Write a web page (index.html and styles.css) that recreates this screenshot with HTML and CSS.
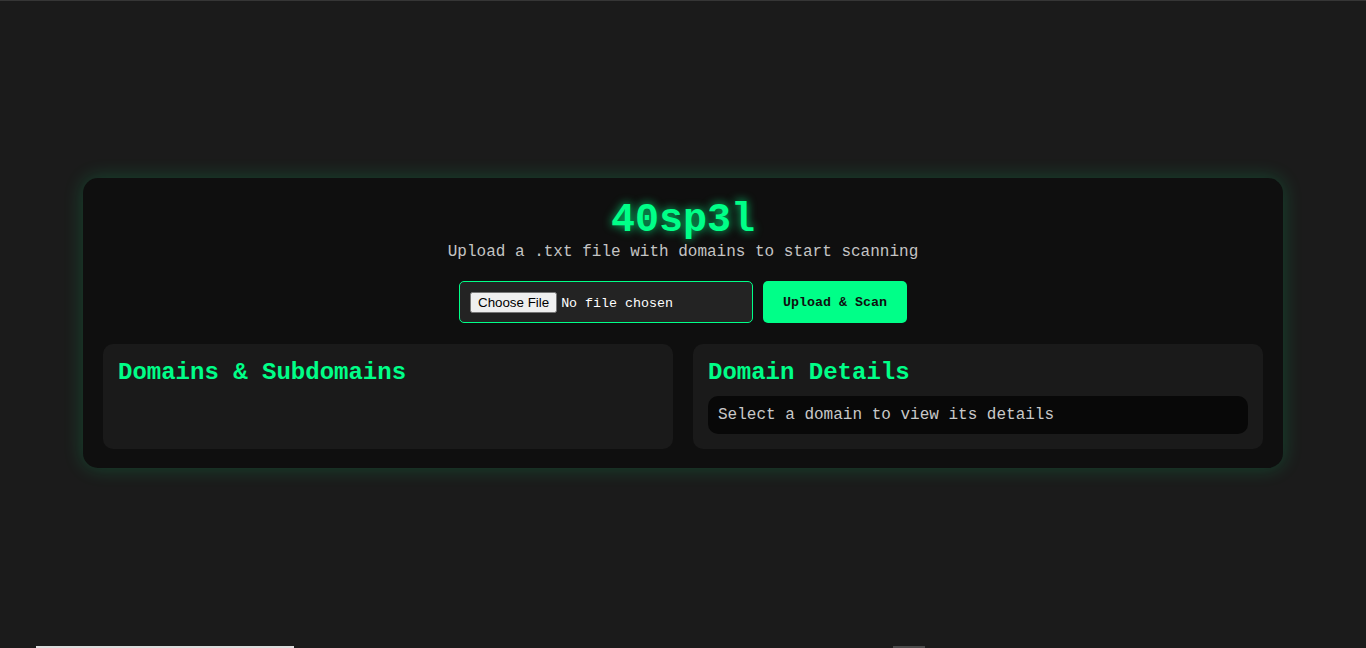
FILE: index.html
```html
<!DOCTYPE html>
<html lang="en">
<head>
<meta charset="utf-8">
<title>40sp3l</title>
<link rel="stylesheet" href="styles.css">
</head>
<body>
<div class="container">
  <header class="header">
    <h1 class="title">40sp3l</h1>
    <p class="subtitle">Upload a .txt file with domains to start scanning</p>
  </header>
  <form class="upload-row">
    <input class="file-input" type="file" accept=".txt">
    <button class="upload-btn" type="button">Upload &amp; Scan</button>
  </form>
  <div class="panels">
    <section class="panel">
      <h2 class="panel-title">Domains &amp; Subdomains</h2>
      <ul class="domain-list"></ul>
    </section>
    <section class="panel">
      <h2 class="panel-title">Domain Details</h2>
      <div class="details-box">Select a domain to view its details</div>
    </section>
  </div>
</div>
<div class="edge-bar edge-bar-left"></div>
<div class="edge-bar edge-bar-mid"></div>
</body>
</html>
```
FILE: styles.css
```css
* { box-sizing: border-box; }
html, body { margin: 0; padding: 0; }
body {
  background: #1b1b1b;
  border-top: 1px solid #363636;
  padding-bottom: 3px;
  min-height: 100vh;
  display: flex;
  align-items: center;
  justify-content: center;
  font-family: "Courier New", "Liberation Mono", monospace;
  color: #cfcfcf;
}
.container {
  width: 1200px;
  background: #0f0f0f;
  border-radius: 15px;
  padding: 20px 20px 19px;
  box-shadow: 0 0 20px rgba(0, 255, 136, 0.2);
}
.header { text-align: center; }
.title {
  margin: 0;
  font-size: 40px;
  font-weight: bold;
  color: #00ff88;
  text-shadow: 0 0 10px rgba(0, 255, 136, 0.8);
  line-height: 45px;
}
.subtitle {
  margin: 0;
  font-size: 16px;
  line-height: 18px;
  color: #c4c4c4;
}
.upload-row {
  display: flex;
  justify-content: center;
  gap: 10px;
  margin: 20px 0 21px;
}
.file-input {
  width: 294px;
  height: 42px;
  padding: 10px;
  background: #232323;
  border: 1px solid #00ff88;
  border-radius: 5px;
  color: #ffffff;
  font-family: "Courier New", "Liberation Mono", monospace;
  font-size: 13.33px;
}
.upload-btn {
  width: 144px;
  height: 42px;
  background: #00ff88;
  color: #0f0f0f;
  border: none;
  border-radius: 5px;
  font-family: "Courier New", "Liberation Mono", monospace;
  font-weight: bold;
  font-size: 13.33px;
}
.panels {
  display: grid;
  grid-template-columns: 1fr 1fr;
  gap: 20px;
}
.panel {
  background: #1a1a1a;
  border-radius: 10px;
  padding: 15px;
}
.panel-title {
  margin: 0 0 10px;
  font-size: 24px;
  line-height: 27px;
  font-weight: bold;
  color: #00ff88;
}
.domain-list { margin: 0; padding: 0; list-style: none; }
.details-box {
  background: #080808;
  border-radius: 10px;
  padding: 10px;
  font-size: 16px;
  line-height: 18px;
  color: #c8c8c8;
}
.edge-bar {
  position: fixed;
  bottom: 0;
  height: 2px;
}
.edge-bar-left { left: 36px; width: 258px; background: #dcdcdc; }
.edge-bar-mid { left: 893px; width: 32px; background: #4a4a4a; }
```
